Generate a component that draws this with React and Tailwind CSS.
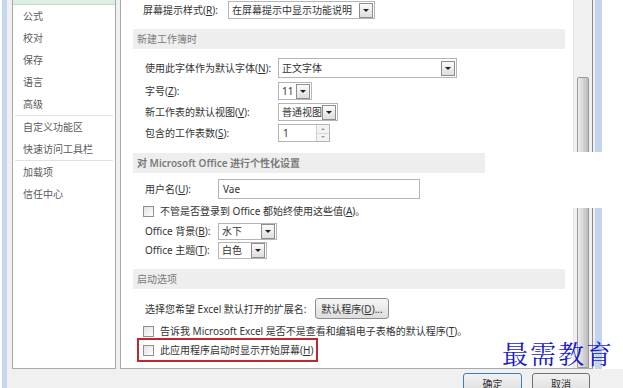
import React from 'react';

const navItems = [
    ['公式', '校对', '保存', '语言', '高级'],
    ['自定义功能区', '快速访问工具栏'],
    ['加载项', '信任中心'],
];

const Arrow = () => (
    <span className="w-0 h-0 border-x-[3px] border-x-transparent border-t-[3px] border-t-[#222]" />
);

const Combo = ({ width, text, height = 'h-[18px]' }) => (
    <div className={`${width} ${height} flex items-center bg-white border border-[#b5b5b5]`}>
        <span className="pl-[3px] flex-1 whitespace-nowrap">{text}</span>
        <div className="w-[14px] h-[15px] mr-[1px] flex items-center justify-center border border-[#8e8e8e] bg-gradient-to-b from-[#fbfbfb] to-[#dedede]">
            <Arrow />
        </div>
    </div>
);

const Checkbox = () => (
    <span className="w-[11px] h-[11px] border border-[#8f8f8f] bg-gradient-to-br from-[#e2e2e2] to-white shrink-0" />
);

const Header = ({ children, bold }) => (
    <div className={`ml-[12px] w-[432px] h-[20px] flex items-center pl-[4px] bg-[#eeeeee] text-[#7a7a7a] ${bold ? 'font-semibold' : ''}`}>
        {children}
    </div>
);

const App = () => {
    return (
        <div className="relative w-[623px] h-[388px] overflow-hidden flex bg-[#f0f0f0] text-[10px] text-[#333] whitespace-nowrap font-['Noto_Sans','Noto_Sans_CJK_SC',sans-serif] leading-none">
            {/* left window edge */}
            <div className="w-[2px] bg-white" />
            <div className="w-[5px] bg-[#c5d7ec]" />

            <div className="flex-1 flex flex-col">
                <div className="h-[370px] flex">
                    <div className="w-[5px]" />

                    {/* navigation list */}
                    <nav className="w-[104px] h-[369px] bg-white border-x border-b border-[#a9a9a9] text-[#5a5a5a]">
                        <div className="h-[5px] bg-[#dcefe2] border-b border-[#b8dcc4]" />
                        {navItems.map((group, gi) => (
                            <div key={gi} className={gi > 0 ? 'border-t border-[#e2e2e2] mx-[2px]' : ''}>
                                {group.map((item) => (
                                    <div key={item} className={`h-[22px] flex items-center ${gi > 0 ? 'pl-[8px]' : 'pl-[10px]'}`}>
                                        {item}
                                    </div>
                                ))}
                            </div>
                        ))}
                    </nav>

                    <div className="w-[4px]" />

                    {/* main options panel */}
                    <div className="w-[473px] h-[369px] flex bg-white border-l border-b border-r border-[#a9a9a9] border-r-[#8a8a8a]">
                        <div className="w-[452px] flex flex-col">
                            <div className="h-[20px] flex items-center pl-[22px]">
                                <span className="w-[85px]">屏幕提示样式(<u>R</u>):</span>
                                <Combo width="w-[147px]" text="在屏幕提示中显示功能说明" />
                            </div>

                            <div className="mt-[9px]">
                                <Header>新建工作簿时</Header>
                            </div>

                            <div className="mt-[9px] h-[20px] flex items-center pl-[24px]">
                                <span className="w-[133px]">使用此字体作为默认字体(<u>N</u>):</span>
                                <Combo width="w-[179px]" height="h-[20px]" text="正文字体" />
                            </div>
                            <div className="mt-[3px] h-[20px] flex items-center pl-[24px]">
                                <span className="w-[133px]">字号(<u>Z</u>):</span>
                                <Combo width="w-[34px]" text="11" />
                            </div>
                            <div className="mt-[1px] h-[20px] flex items-center pl-[24px]">
                                <span className="w-[133px]">新工作表的默认视图(<u>V</u>):</span>
                                <Combo width="w-[60px]" text="普通视图" />
                            </div>
                            <div className="mt-[1px] h-[20px] flex items-center pl-[24px]">
                                <span className="w-[133px]">包含的工作表数(<u>S</u>):</span>
                                <div className="w-[52px] h-[18px] flex items-center bg-white border border-[#b5b5b5]">
                                    <span className="pl-[4px] flex-1">1</span>
                                    <div className="w-[13px] h-[16px] flex flex-col border-l border-[#d0d0d0]">
                                        <div className="flex-1 flex items-center justify-center bg-[#f3f3f3] border-b border-[#d8d8d8]">
                                            <span className="w-0 h-0 border-x-[2px] border-x-transparent border-b-[2px] border-b-[#999]" />
                                        </div>
                                        <div className="flex-1 flex items-center justify-center bg-[#f3f3f3]">
                                            <span className="w-0 h-0 border-x-[2px] border-x-transparent border-t-[2px] border-t-[#999]" />
                                        </div>
                                    </div>
                                </div>
                            </div>

                            <div className="mt-[10px]">
                                <Header bold>对 Microsoft Office 进行个性化设置</Header>
                            </div>

                            <div className="mt-[6px] h-[20px] flex items-center pl-[24px]">
                                <span className="w-[73px]">用户名(<u>U</u>):</span>
                                <div className="w-[202px] h-[20px] flex items-center pl-[4px] bg-white border border-[#b5b5b5]">Vae</div>
                            </div>
                            <div className="mt-[2px] h-[20px] flex items-center gap-[6px] pl-[22px]">
                                <Checkbox />
                                <span>不管是否登录到 Office 都始终使用这些值(<u>A</u>)。</span>
                            </div>
                            <div className="mt-[1px] h-[18px] flex items-center pl-[24px]">
                                <span className="w-[73px]">Office 背景(<u>B</u>):</span>
                                <Combo width="w-[59px]" height="h-[17px]" text="水下" />
                            </div>
                            <div className="mt-[1px] h-[18px] flex items-center pl-[24px]">
                                <span className="w-[73px]">Office 主题(<u>T</u>):</span>
                                <Combo width="w-[49px]" height="h-[17px]" text="白色" />
                            </div>

                            <div className="mt-[10px]">
                                <Header>启动选项</Header>
                            </div>

                            <div className="mt-[9px] h-[21px] flex items-center pl-[24px]">
                                <span className="w-[170px]">选择您希望 Excel 默认打开的扩展名:</span>
                                <button className="w-[74px] h-[21px] rounded-[3px] border border-[#8e8e8e] bg-gradient-to-b from-[#f6f6f6] to-[#dddddd]">
                                    默认程序(<u>D</u>)...
                                </button>
                            </div>
                            <div className="mt-[3px] h-[18px] flex items-center gap-[6px] pl-[22px]">
                                <Checkbox />
                                <span>告诉我 Microsoft Excel 是否不是查看和编辑电子表格的默认程序(<u>T</u>)。</span>
                            </div>
                            <div className="mt-[-2px] ml-[16px] w-[181px] h-[24px] flex items-center gap-[6px] pl-[4px] border-2 border-[#c0272d]">
                                <Checkbox />
                                <span>此应用程序启动时显示开始屏幕(<u>H</u>)</span>
                            </div>
                        </div>

                        {/* scrollbar */}
                        <div className="w-[19px] flex flex-col bg-[#f0f0f0] border-l border-[#e6e6e6]">
                            <div className="h-[77px]" />
                            <div className="flex-1 mx-[3px] rounded-t-[2px] border border-[#9a9a9a] bg-gradient-to-r from-[#ececec] via-[#d6d6d6] to-[#bcbcbc]" />
                        </div>
                    </div>

                    <div className="w-[2px]" />
                    <div className="w-[7px] bg-[#c3d5ee]" />
                    <div className="flex-1 bg-white" />
                </div>

                {/* dialog buttons */}
                <div className="flex-1 flex pt-[4px] pl-[456px] gap-[10px]">
                    <button className="w-[59px] h-[22px] rounded-[3px] border border-[#3c7fb1] bg-gradient-to-b from-[#f2f2f2] to-[#dcdcdc]">确定</button>
                    <button className="w-[58px] h-[22px] rounded-[3px] border border-[#707070] bg-gradient-to-b from-[#f2f2f2] to-[#dcdcdc]">取消</button>
                </div>
            </div>

            {/* pasted white patch over scrollbar */}
            <div className="absolute left-[485px] top-[152px] w-[138px] h-[56px] bg-white" />

            {/* watermark */}
            <div className="absolute left-[502px] top-[340px] text-[26px] tracking-[2px] text-[#1a1ad0] font-['Noto_Serif_CJK_SC','Noto_Sans_CJK_SC',serif] leading-none">
                最需教育
            </div>
        </div>
    );
};

export default App;
